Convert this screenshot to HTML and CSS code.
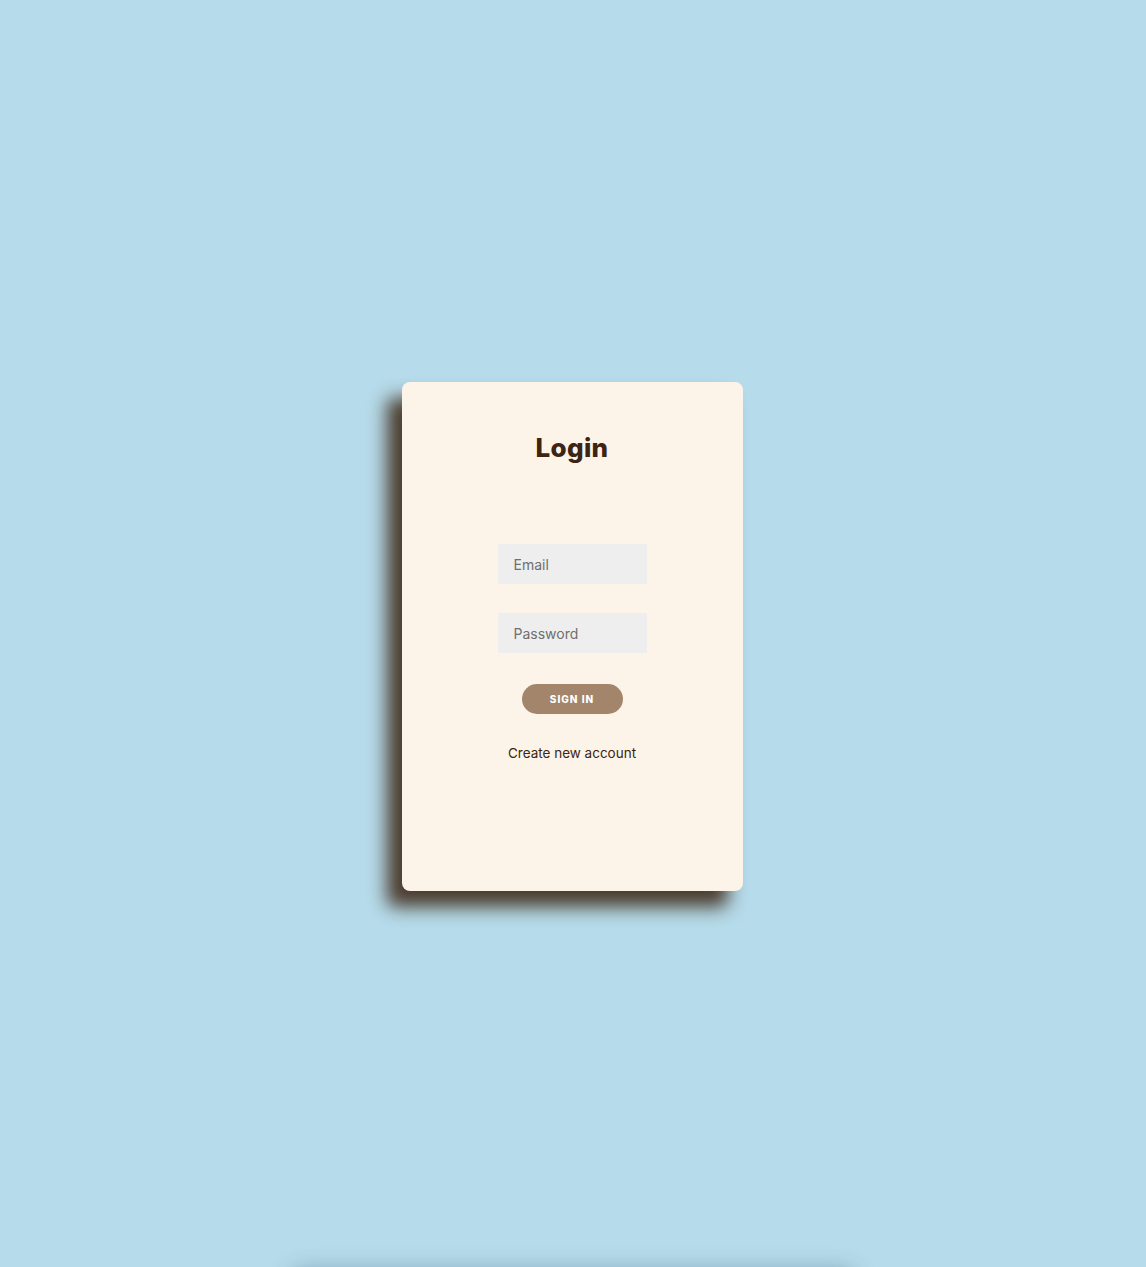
FILE: index.html
```html
<!DOCTYPE html>
<html lang="en">
<head>
  <meta charset="UTF-8">
  <meta name="viewport" content="width=device-width, initial-scale=1.0">
  <title>Login</title>
  <link rel="stylesheet" href="styles.css">
</head>
<body>
  <div class="page">
    <form class="card" onsubmit="return false">
      <h1 class="title">Login</h1>
      <input class="field" type="email" placeholder="Email">
      <input class="field" type="password" placeholder="Password">
      <button class="button" type="submit">Sign in</button>
      <a class="link" href="#">Create new account</a>
    </form>
  </div>
  <div class="card hidden"></div>
</body>
</html>
```

FILE: styles.css
```css
body {
  font-family: Inter, "Open Sans", sans-serif;
  background: #b6dbea;
  margin: 0;
  color: #3d2414;
  overflow: hidden;
}

.page {
  height: 1267px;
  display: flex;
  justify-content: center;
  align-items: flex-start;
  padding-top: 382px;
  padding-right: 2px;
  box-sizing: border-box;
}

.card {
  width: 341px;
  height: 509px;
  background: #fcf4e8;
  border-radius: 8px;
  box-shadow: -15px 16px 18px rgba(70, 52, 36, 0.95);
  display: flex;
  flex-direction: column;
  align-items: center;
  box-sizing: border-box;
  padding-top: 50px;
}

.hidden {
  width: 560px;
  margin: 8px auto 0;
  box-shadow: 0 -4px 22px rgba(50, 95, 120, 0.45);
}

.title {
  font-size: 26px;
  font-weight: 800;
  margin: 0 0 81px;
  color: #3d2414;
  letter-spacing: 0.3px;
}

.field {
  width: 149px;
  height: 40px;
  border: none;
  background: #eeeeee;
  padding: 0 16px;
  box-sizing: border-box;
  font-family: inherit;
  font-size: 14px;
  margin-bottom: 29px;
  outline: none;
}

.field::placeholder {
  color: #6f6f6f;
}

.button {
  width: 101px;
  height: 30px;
  border: none;
  border-radius: 15px;
  background: #a3856b;
  color: #fff;
  font-family: inherit;
  font-weight: 800;
  font-size: 10px;
  letter-spacing: 1px;
  text-transform: uppercase;
  margin-top: 2px;
  cursor: pointer;
}

.link {
  margin-top: 31px;
  font-size: 13.5px;
  color: #3d2414;
  text-decoration: none;
}
```
